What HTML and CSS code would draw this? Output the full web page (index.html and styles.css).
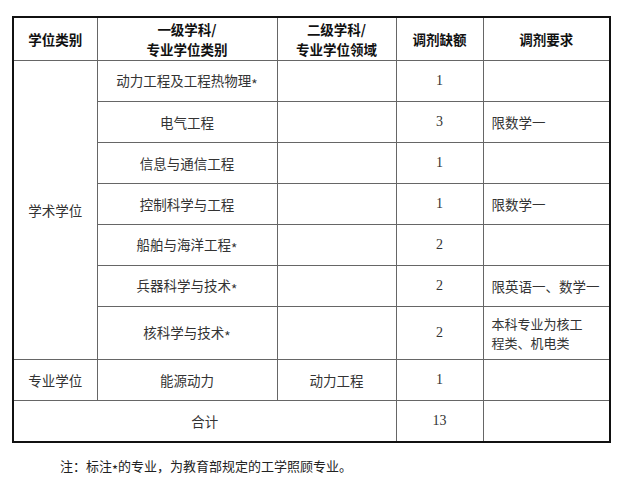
FILE: index.html
```html
<!DOCTYPE html>
<html lang="zh-CN">
<head>
<meta charset="utf-8">
<link rel="stylesheet" href="styles.css">
</head>
<body>
<div class="page">
<table class="quota">
  <colgroup>
    <col class="c1"><col class="c2"><col class="c3"><col class="c4"><col class="c5">
  </colgroup>
  <thead>
    <tr class="head">
      <th>学位类别</th>
      <th><span class="ln">一级学科/</span><span class="ln">专业学位类别</span></th>
      <th><span class="ln">二级学科/</span><span class="ln">专业学位领域</span></th>
      <th>调剂缺额</th>
      <th>调剂要求</th>
    </tr>
  </thead>
  <tbody>
    <tr>
      <td rowspan="7">学术学位</td>
      <td>动力工程及工程热物理<span class="ast">*</span></td>
      <td></td>
      <td class="num">1</td>
      <td class="req"></td>
    </tr>
    <tr><td>电气工程</td><td></td><td class="num">3</td><td class="req">限数学一</td></tr>
    <tr><td>信息与通信工程</td><td></td><td class="num">1</td><td class="req"></td></tr>
    <tr><td>控制科学与工程</td><td></td><td class="num">1</td><td class="req">限数学一</td></tr>
    <tr><td>船舶与海洋工程<span class="ast">*</span></td><td></td><td class="num">2</td><td class="req"></td></tr>
    <tr><td>兵器科学与技术<span class="ast">*</span></td><td></td><td class="num">2</td><td class="req">限英语一、数学一</td></tr>
    <tr class="tall"><td>核科学与技术<span class="ast">*</span></td><td></td><td class="num">2</td><td class="req"><span class="ln">本科专业为核工</span><span class="ln">程类、机电类</span></td></tr>
    <tr><td>专业学位</td><td>能源动力</td><td>动力工程</td><td class="num">1</td><td class="req"></td></tr>
    <tr><td colspan="3">合计</td><td class="num">13</td><td class="req"></td></tr>
  </tbody>
</table>
<p class="note">注：标注<span class="ast">*</span>的专业，为教育部规定的工学照顾专业。</p>
</div>
</body>
</html>
```
FILE: styles.css
```css
html, body {
  margin: 0;
  padding: 0;
  background: #ffffff;
}
.page {
  padding: 16px 0 0 12px;
  font-family: "Noto Sans CJK SC", "Liberation Serif", sans-serif;
  color: #333333;
}
.quota {
  border-collapse: collapse;
  table-layout: fixed;
  width: 598px;
  border: 2px solid #111111;
  font-size: 13.5px;
}
.c1 { width: 84px; }
.c2 { width: 180px; }
.c3 { width: 119px; }
.c4 { width: 87px; }
.c5 { width: 127px; }
.quota th, .quota td {
  border: 1px solid #666666;
  text-align: center;
  vertical-align: middle;
  padding: 0;
  height: 40px;
  line-height: 18px;
}
.quota th {
  height: 42px;
  font-weight: 600;
  color: #111111;
}
.ln {
  display: block;
  line-height: 20px;
}
.quota td.num {
  font-family: "Liberation Serif", serif;
  font-size: 14px;
}
.quota td.req {
  text-align: left;
  padding-left: 8px;
}
.quota td.req .ln {
  font-size: 13px;
  line-height: 19px;
}
.quota tr.tall td {
  height: 52px;
}
.ast {
  display: inline-block;
  vertical-align: -4px;
  line-height: 1;
}
.note {
  margin: 13px 0 0 48px;
  font-size: 13px;
  color: #222222;
}
```
